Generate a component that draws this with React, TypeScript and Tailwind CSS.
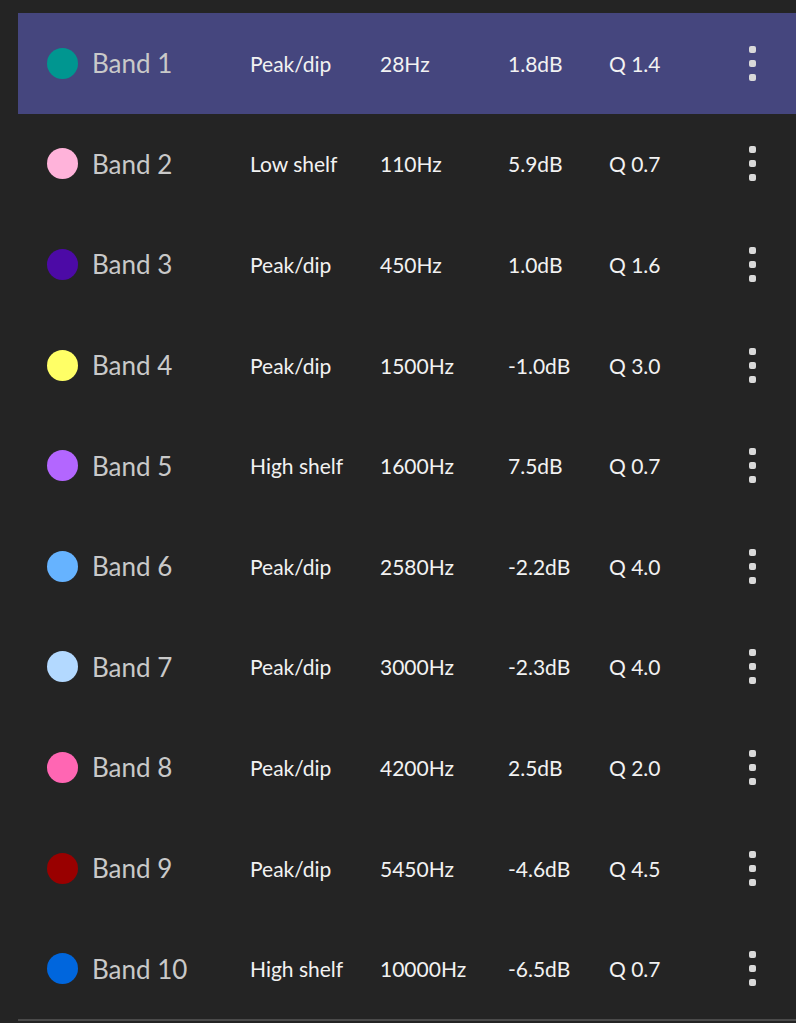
import React from 'react';

interface Band {
  name: string;
  color: string;
  type: string;
  freq: string;
  gain: string;
  q: string;
}

const bands: Band[] = [
  { name: 'Band 1', color: 'bg-[#009690]', type: 'Peak/dip', freq: '28Hz', gain: '1.8dB', q: 'Q 1.4' },
  { name: 'Band 2', color: 'bg-[#ffb3da]', type: 'Low shelf', freq: '110Hz', gain: '5.9dB', q: 'Q 0.7' },
  { name: 'Band 3', color: 'bg-[#4c0aa6]', type: 'Peak/dip', freq: '450Hz', gain: '1.0dB', q: 'Q 1.6' },
  { name: 'Band 4', color: 'bg-[#ffff66]', type: 'Peak/dip', freq: '1500Hz', gain: '-1.0dB', q: 'Q 3.0' },
  { name: 'Band 5', color: 'bg-[#b366ff]', type: 'High shelf', freq: '1600Hz', gain: '7.5dB', q: 'Q 0.7' },
  { name: 'Band 6', color: 'bg-[#66b3ff]', type: 'Peak/dip', freq: '2580Hz', gain: '-2.2dB', q: 'Q 4.0' },
  { name: 'Band 7', color: 'bg-[#b3d9ff]', type: 'Peak/dip', freq: '3000Hz', gain: '-2.3dB', q: 'Q 4.0' },
  { name: 'Band 8', color: 'bg-[#ff66b3]', type: 'Peak/dip', freq: '4200Hz', gain: '2.5dB', q: 'Q 2.0' },
  { name: 'Band 9', color: 'bg-[#990000]', type: 'Peak/dip', freq: '5450Hz', gain: '-4.6dB', q: 'Q 4.5' },
  { name: 'Band 10', color: 'bg-[#0066dd]', type: 'High shelf', freq: '10000Hz', gain: '-6.5dB', q: 'Q 0.7' },
];

const MoreDots: React.FC = () => (
  <div className="flex flex-col gap-[7px]">
    <span className="block w-[7px] h-[7px] rounded-[2px] bg-[#d9d9d9]" />
    <span className="block w-[7px] h-[7px] rounded-[2px] bg-[#d9d9d9]" />
    <span className="block w-[7px] h-[7px] rounded-[2px] bg-[#d9d9d9]" />
  </div>
);

export default function App() {
  const selected = 0;

  return (
    <div className="min-h-screen w-full bg-[#242424] pt-[13px] pl-[18px] font-['Lato','Noto_Sans',sans-serif]">
      <div className="border-b-2 border-[#4a4a4a]">
        {bands.map((band, i) => (
          <div
            key={band.name}
            className={`flex items-center h-[100.6px] pl-[29px] ${i === selected ? 'bg-[#45467e]' : ''}`}
          >
            <span className={`block shrink-0 w-[31px] h-[31px] rounded-full ${band.color}`} />
            <span className="shrink-0 w-[172px] pl-[14px] text-[26px] text-[#c9c9c9] leading-none">{band.name}</span>
            <span className="shrink-0 w-[130px] text-[21px] text-[#f2f2f2] leading-none">{band.type}</span>
            <span className="shrink-0 w-[128px] text-[21px] text-[#f2f2f2] leading-none">{band.freq}</span>
            <span className="shrink-0 w-[101px] text-[21px] text-[#f2f2f2] leading-none">{band.gain}</span>
            <span className="shrink-0 w-[140px] text-[21px] text-[#f2f2f2] leading-none">{band.q}</span>
            <MoreDots />
          </div>
        ))}
      </div>
    </div>
  );
}
